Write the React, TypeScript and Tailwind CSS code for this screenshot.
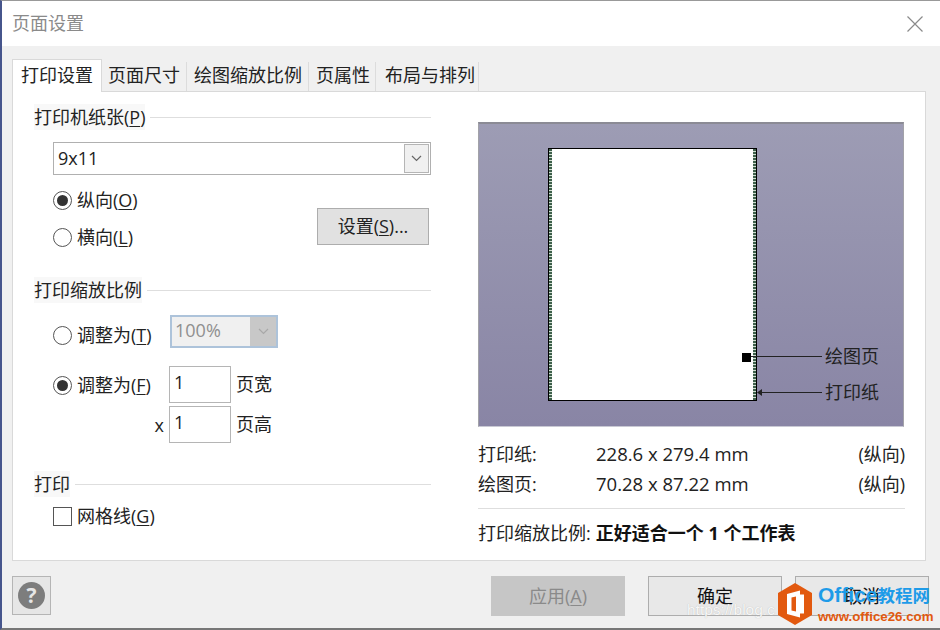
const font = { fontFamily: '"Open Sans", "Noto Sans CJK SC", sans-serif' };

const tabs = [
  { label: "页面尺寸", pad: "pl-[6px] pr-[6px]" },
  { label: "绘图缩放比例", pad: "pl-[7px] pr-[6px]" },
  { label: "页属性", pad: "pl-[7px] pr-[5px]" },
  { label: "布局与排列", pad: "pl-[9px] pr-[3px]" },
];

function Mn({ children }: { children: string }) {
  return <u className="underline underline-offset-2 decoration-1">{children}</u>;
}

function SectionHead({ children }: { children: React.ReactNode }) {
  return (
    <div className="flex h-[26px] items-center">
      <span className="-ml-px bg-[#f8f8f8] leading-[26px]">{children}</span>
      <div className="ml-[5px] h-px flex-1 bg-[#dedede]" />
    </div>
  );
}

function Radio({ checked }: { checked?: boolean }) {
  return (
    <span className="flex h-[19px] w-[19px] shrink-0 items-center justify-center rounded-full border border-[#555] bg-white">
      {checked && <span className="h-[11px] w-[11px] rounded-full bg-[#333]" />}
    </span>
  );
}

function Chevron({ color }: { color: string }) {
  return (
    <svg width="11" height="7" viewBox="0 0 11 7" fill="none">
      <path d="M1 1l4.5 4.5L10 1" stroke={color} strokeWidth="1.2" />
    </svg>
  );
}

function FootBtn({ children, disabled }: { children: React.ReactNode; disabled?: boolean }) {
  return (
    <button
      className={`flex h-[40px] w-[134px] shrink-0 items-center justify-center border ${
        disabled ? "border-[#c6c6c6] bg-[#c6c6c6] text-[#8a8a8a]" : "border-[#adadad] bg-[#e8e8e8] text-[#111]"
      }`}
    >
      {children}
    </button>
  );
}

function Strip({ side }: { side: string }) {
  return (
    <div
      className={`absolute top-0 bottom-0 w-[3px] bg-[repeating-linear-gradient(to_bottom,#3d5f4a_0px,#3d5f4a_2px,#d3dfd3_2px,#d3dfd3_3px)] ${side}`}
    />
  );
}

function OfficeMark() {
  return (
    <div className="absolute top-[581px] left-[775px] flex items-center">
      <svg width="36" height="42" viewBox="0 0 36 42">
        <path d="M18 0l17 10v22L18 42 1 32V10z" fill="#e2590f" />
        <path d="M10 11l13-3.500v27L10 31z" fill="#fff" />
        <path d="M14.500 14.500l4.500-1v15l-4.500-1z" fill="#e2590f" />
        <path d="M23 11.500h4v19h-4z" fill="#fff" />
      </svg>
      <div className="ml-[5px] flex flex-col font-['Liberation_Sans','Noto_Sans_CJK_SC',sans-serif] font-bold">
        <span className="text-[21px] leading-[25px] whitespace-nowrap text-[#1e9be8]">
          Office<span className="text-[17.500px]">教程网</span>
        </span>
        <span className="text-[13.300px] leading-[16px] whitespace-nowrap text-[#e2590f]">www.office26.com</span>
      </div>
    </div>
  );
}

export default function App() {
  return (
    <div
      className="relative flex h-[630px] w-[940px] flex-col overflow-hidden border-t border-b-2 border-l-2 border-t-[#999] border-b-[#777] border-l-[#46558c] bg-white text-[18px] text-[#222]"
      style={font}
    >
      {/* title bar */}
      <div className="flex h-[45px] shrink-0 items-center justify-between pr-[17px] pl-[10px]">
        <span className="text-[#8a8a8a]">页面设置</span>
        <svg width="16" height="16" viewBox="0 0 16 16" fill="none">
          <path d="M.5.5l15 15M15.500.5l-15 15" stroke="#8a8a8a" strokeWidth="1.2" />
        </svg>
      </div>

      <div className="flex min-h-0 flex-1 flex-col bg-[#f0f0f0] pt-[12px] pr-[14px] pl-[10px]">
        {/* tabs */}
        <div className="flex h-[33px] items-end">
          <div className="z-10 -mb-px flex h-[33px] w-[90px] items-center justify-center border border-b-0 border-[#d9d9d9] bg-white pb-[2px]">
            打印设置
          </div>
          {tabs.map((t) => (
            <div key={t.label} className={`flex h-[29px] items-center border-r border-[#dcdcdc] bg-[#f0f0f0] pb-[2px] ${t.pad}`}>
              {t.label}
            </div>
          ))}
        </div>

        {/* panel */}
        <div className="flex h-[470px] border border-[#d9d9d9] bg-white">
          <div className="w-[418px] pt-[12px] pl-[22px]">
            <div className="w-[396px]">
              <SectionHead>
                打印机纸张(<Mn>P</Mn>)
              </SectionHead>

              <div className="mt-[12px] ml-[18px] flex h-[33px] items-center justify-between border border-[#b0b0b0] pr-px pl-[4px]">
                <span>9x11</span>
                <div className="flex h-[29px] w-[25px] items-center justify-center border border-[#b5b5b5] bg-[#f0f0f0]">
                  <Chevron color="#666" />
                </div>
              </div>

              <div className="mt-[11px] ml-[18px] flex items-start justify-between">
                <div className="flex flex-col gap-[9px]">
                  <label className="flex h-[28px] items-center gap-[5px]">
                    <Radio checked />
                    <span>
                      纵向(<Mn>O</Mn>)
                    </span>
                  </label>
                  <label className="flex h-[28px] items-center gap-[5px]">
                    <Radio />
                    <span>
                      横向(<Mn>L</Mn>)
                    </span>
                  </label>
                </div>
                <button className="mt-[22px] mr-[2px] flex h-[37px] w-[112px] items-center justify-center border border-[#adadad] bg-[#e1e1e1]">
                  设置(<Mn>S</Mn>)...
                </button>
              </div>

              <div className="mt-[26px]">
                <SectionHead>打印缩放比例</SectionHead>
              </div>

              <div className="mt-[12px] ml-[18px] flex h-[33px]">
                <label className="mt-[6px] flex h-[28px] w-[117px] items-center gap-[5px]">
                  <Radio />
                  <span>
                    调整为(<Mn>T</Mn>)
                  </span>
                </label>
                <div className="flex h-[33px] w-[108px] items-stretch border-2 border-[#adc3da] bg-[#f0f0f0]">
                  <span className="flex-1 pl-[3px] leading-[26px] text-[#8f8f8f]">100%</span>
                  <div className="flex w-[26px] items-center justify-center bg-[#c8c8c8]">
                    <Chevron color="#a8a8a8" />
                  </div>
                </div>
              </div>

              <div className="mt-[18px] ml-[18px] flex h-[37px]">
                <label className="mt-[5px] flex h-[28px] w-[116px] items-center gap-[5px]">
                  <Radio checked />
                  <span>
                    调整为(<Mn>F</Mn>)
                  </span>
                </label>
                <div className="h-[37px] w-[62px] border border-[#b5b5b5] pl-[4px] leading-[30px]">1</div>
                <span className="ml-[5px] leading-[37px]">页宽</span>
              </div>

              <div className="mt-[3px] ml-[18px] flex h-[37px]">
                <span className="w-[116px] pr-[5px] text-right leading-[39px]">x</span>
                <div className="h-[37px] w-[62px] border border-[#b5b5b5] pl-[4px] leading-[30px]">1</div>
                <span className="ml-[5px] leading-[37px]">页高</span>
              </div>

              <div className="mt-[28px]">
                <SectionHead>打印</SectionHead>
              </div>

              <label className="mt-[5px] ml-[18px] flex h-[28px] items-center gap-[5px]">
                <span className="h-[19px] w-[19px] border border-[#555] bg-white" />
                <span>
                  网格线(<Mn>G</Mn>)
                </span>
              </label>
            </div>
          </div>

          <div className="ml-[47px] w-[427px] pt-[30px]">
            {/* preview */}
            <div className="relative h-[305px] w-[426px] border border-t-2 border-[#a2a2a8] border-t-[#8b8b95] border-b-[#c9c9d4] bg-gradient-to-b from-[#9d9cb4] to-[#8985a5]">
              <div className="absolute top-[24px] left-[69px] h-[253px] w-[209px] border border-black bg-white">
                <Strip side="left-0" />
                <Strip side="right-0" />
              </div>
              <svg className="absolute inset-0" width="424" height="302" fill="none">
                <rect x="263" y="229" width="9" height="9" fill="#000" />
                <path d="M272 232.500h71" stroke="#222" />
                <path d="M283 268.500h60" stroke="#222" />
                <path d="M278 268.500l5-3.500v7z" fill="#222" />
              </svg>
              <span className="absolute top-[219px] left-[346px] leading-[26px]">绘图页</span>
              <span className="absolute top-[255px] left-[346px] leading-[26px]">打印纸</span>
            </div>

            {/* page sizes */}
            <div className="mt-[12px] flex h-[30px] items-center">
              <span className="w-[118px]">打印纸:</span>
              <span className="flex-1 text-[18.500px]">228.6 x 279.4 mm</span>
              <span>(纵向)</span>
            </div>
            <div className="flex h-[30px] items-center">
              <span className="w-[118px]">绘图页:</span>
              <span className="flex-1 text-[18.500px]">70.28 x 87.22 mm</span>
              <span>(纵向)</span>
            </div>
            <div className="mt-[9px] h-px bg-[#dedede]" />
            <div className="mt-[9px] flex h-[30px] items-center">
              <span>打印缩放比例:</span>
              <span className="ml-[5px] font-bold text-[#111]">正好适合一个 1 个工作表</span>
            </div>
          </div>
        </div>

        {/* footer */}
        <div className="mt-[15px] flex items-start">
          <button className="flex h-[39px] w-[39px] shrink-0 items-center justify-center border border-[#b5b5b5] bg-[#e6e6e6]">
            <span className="flex h-[27px] w-[27px] items-center justify-center rounded-full bg-[#7d7d7d] text-[21px] font-bold text-[#e6e6e6]">
              ?
            </span>
          </button>
          <div className="ml-[440px] flex shrink-0">
            <FootBtn disabled>
              应用(<Mn>A</Mn>)
            </FootBtn>
            <div className="ml-[23px]">
              <FootBtn>确定</FootBtn>
            </div>
            <div className="ml-[13px]">
              <FootBtn>取消</FootBtn>
            </div>
          </div>
        </div>
      </div>

      {/* watermark over the footer */}
      <span className="absolute top-[597px] left-[685px] font-['Liberation_Sans',sans-serif] text-[15.500px] leading-[24px] whitespace-nowrap text-[#f7f7f7] [text-shadow:0_0_1px_#b4b4b4]">
        https://blog.c
      </span>
      <OfficeMark />
    </div>
  );
}
